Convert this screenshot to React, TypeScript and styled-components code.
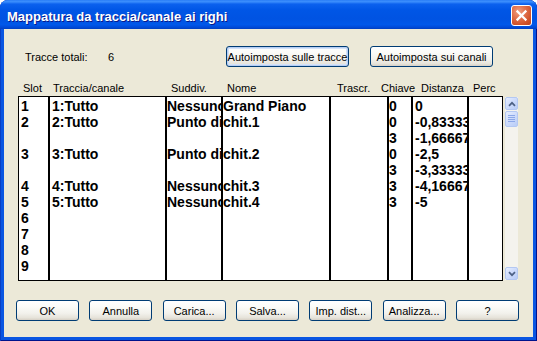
import React from "react";
import styled, { createGlobalStyle } from "styled-components";

const Global = createGlobalStyle`
  html, body { margin: 0; padding: 0; background: #ffffff; }
  body { width: 537px; height: 341px; overflow: hidden; }
  #root { width: 537px; height: 341px; }
  * { box-sizing: border-box; }
`;

const Window = styled.div`
  width: 537px;
  height: 341px;
  display: flex;
  flex-direction: column;
  border-radius: 8px 8px 0 0;
  overflow: hidden;
  background: #0a56e2;
  box-shadow: inset 1px 0 #0a3fc4, inset -1px 0 #00138c, inset 0 -1px #00138c;
  font-family: "Liberation Sans", Arial, sans-serif;
`;

const TitleBar = styled.div`
  height: 29px;
  flex: none;
  display: flex;
  align-items: center;
  justify-content: space-between;
  padding: 0 5px 0 7px;
  background: linear-gradient(
    180deg,
    #2a7ef6 0%,
    #3c8ffd 6%,
    #0b61ee 14%,
    #0056e6 35%,
    #0053e2 65%,
    #0058ea 85%,
    #004ad8 94%,
    #003fc0 100%
  );
`;

const Title = styled.div`
  margin-top: 3px;
  color: #ffffff;
  font-size: 13px;
  font-weight: bold;
  text-shadow: 1px 1px 0 #0a1a8a;
  white-space: nowrap;
`;

const CloseButton = styled.div`
  width: 21px;
  height: 21px;
  margin-top: 2px;
  border: 1px solid #ffffff;
  border-radius: 3px;
  background: radial-gradient(circle at 35% 30%, #f0a083 0%, #e2744f 35%, #cf4f27 75%, #b8421f 100%);
  display: flex;
  align-items: center;
  justify-content: center;
`;

const Body = styled.div`
  flex: 1;
  margin: 0 4px 4px 4px;
  background: #ece9d8;
  display: flex;
  flex-direction: column;
  padding: 17px 0 16px 0;
`;

const TopRow = styled.div`
  display: flex;
  align-items: center;
  height: 21px;
  padding-left: 21px;
  font-size: 11px;
  color: #000;
`;

const Label = styled.div<{ $w: number }>`
  width: ${(p) => p.$w}px;
  flex: none;
  white-space: nowrap;
`;

const XPButton = styled.button<{ $w: number; $focus?: boolean; $ml?: number }>`
  width: ${(p) => p.$w}px;
  height: 21px;
  flex: none;
  margin: 0 0 0 ${(p) => p.$ml ?? 0}px;
  padding: 0;
  border: 1px solid #003c74;
  border-radius: 3px;
  background: linear-gradient(180deg, #ffffff 0%, #fbfbf8 30%, #f2f1ec 65%, #e6e3da 88%, #d6d0c5 100%);
  box-shadow: ${(p) =>
    p.$focus ? "inset 0 0 0 1px #b6cef4, inset 0 0 0 2px #d4e2f8" : "none"};
  font-family: "Liberation Sans", Arial, sans-serif;
  font-size: 11px;
  color: #000;
  white-space: nowrap;
`;

const HeaderRow = styled.div`
  display: flex;
  height: 14px;
  line-height: 14px;
  margin-top: 14px;
  padding-left: 19px;
  font-size: 11px;
  color: #000;
`;

const HeaderCell = styled.div<{ $w?: number }>`
  width: ${(p) => (p.$w ? `${p.$w}px` : "auto")};
  flex: none;
  white-space: nowrap;
`;

const TableArea = styled.div`
  display: flex;
  margin-top: 1px;
  padding-left: 14px;
`;

const ListFrame = styled.div`
  display: flex;
  width: 485px;
  height: 185px;
  border: 1px solid #000;
  background: #ffffff;
`;

const Column = styled.div<{ $w: number; $pad: number; $first?: boolean }>`
  width: ${(p) => p.$w}px;
  flex: none;
  border-left: ${(p) => (p.$first ? "none" : "2px solid #000")};
  padding: 1px 0 0 ${(p) => p.$pad}px;
  overflow: hidden;
`;

const Cell = styled.div`
  height: 16px;
  line-height: 16px;
  font-size: 14px;
  font-weight: bold;
  color: #000;
  white-space: nowrap;
`;

const ScrollBar = styled.div`
  width: 13px;
  height: 183px;
  margin: 1px 0 0 2px;
  display: flex;
  flex-direction: column;
  background: #f4f3ee;
`;

const ScrollButton = styled.div<{ $h?: number }>`
  width: 13px;
  height: ${(p) => p.$h ?? 13}px;
  flex: none;
  border: 1px solid #b4c8f2;
  border-radius: 2px;
  background: linear-gradient(135deg, #e6eeff 0%, #cddbfc 50%, #b9cdf7 100%);
  display: flex;
  align-items: center;
  justify-content: center;
`;

const Thumb = styled(ScrollButton)`
  margin-top: 1px;
`;

const Track = styled.div`
  flex: 1;
`;

const Footer = styled.div`
  display: flex;
  justify-content: space-between;
  margin-top: 19px;
  padding: 0 14px 0 12px;
`;

type Col = { key: string; w: number; pad: number; cells: string[] };

const columns: Col[] = [
  { key: "slot", w: 29, pad: 2, cells: ["1", "2", "", "3", "", "4", "5", "6", "7", "8", "9"] },
  { key: "track", w: 117, pad: 2, cells: ["1:Tutto", "2:Tutto", "", "3:Tutto", "", "4:Tutto", "5:Tutto"] },
  {
    key: "split",
    w: 56,
    pad: 0,
    cells: ["Nessuno", "Punto di divisione", "", "Punto di divisione", "", "Nessuno", "Nessuno"],
  },
  { key: "name", w: 108, pad: 0, cells: ["Grand Piano", "chit.1", "", "chit.2", "", "chit.3", "chit.4"] },
  { key: "transcr", w: 58, pad: 1, cells: [] },
  { key: "key", w: 24, pad: 0, cells: ["0", "0", "3", "0", "3", "3", "3"] },
  {
    key: "dist",
    w: 56,
    pad: 2,
    cells: ["0", "-0,83333", "-1,66667", "-2,5", "-3,33333", "-4,16667", "-5"],
  },
  { key: "perc", w: 35, pad: 1, cells: [] },
];

const headers: { label: string; w?: number }[] = [
  { label: "Slot", w: 30 },
  { label: "Traccia/canale", w: 118 },
  { label: "Suddiv.", w: 56 },
  { label: "Nome", w: 110 },
  { label: "Trascr.", w: 44 },
  { label: "Chiave", w: 40 },
  { label: "Distanza", w: 52 },
  { label: "Perc" },
];

const footerButtons = ["OK", "Annulla", "Carica...", "Salva...", "Imp. dist...", "Analizza...", "?"];

const Chevron = ({ up }: { up: boolean }) => (
  <svg width="8" height="6" viewBox="0 0 8 6">
    <path
      d={up ? "M1 4.8 L4 1.8 L7 4.8" : "M1 1.2 L4 4.2 L7 1.2"}
      fill="none"
      stroke="#4d6185"
      strokeWidth="1.7"
    />
  </svg>
);

const Grip = () => (
  <svg width="7" height="8" viewBox="0 0 7 8">
    {[0.5, 2.5, 4.5, 6.5].map((y) => (
      <line key={y} x1="0" x2="7" y1={y} y2={y} stroke="#8ca8e8" strokeWidth="1" />
    ))}
  </svg>
);

export default function App() {
  return (
    <>
      <Global />
      <Window>
        <TitleBar>
          <Title>Mappatura da traccia/canale ai righi</Title>
          <CloseButton>
            <svg width="13" height="13" viewBox="0 0 13 13">
              <path d="M2.5 2.5 L10.5 10.5 M10.5 2.5 L2.5 10.5" stroke="#ffffff" strokeWidth="2.3" strokeLinecap="square" />
            </svg>
          </CloseButton>
        </TitleBar>
        <Body>
          <TopRow>
            <Label $w={83}>Tracce totali:</Label>
            <Label $w={118}>6</Label>
            <XPButton $w={123} $focus>
              Autoimposta sulle tracce
            </XPButton>
            <XPButton $w={123} $ml={21}>
              Autoimposta sui canali
            </XPButton>
          </TopRow>
          <HeaderRow>
            {headers.map((h) => (
              <HeaderCell key={h.label} $w={h.w}>
                {h.label}
              </HeaderCell>
            ))}
          </HeaderRow>
          <TableArea>
            <ListFrame>
              {columns.map((c, i) => (
                <Column key={c.key} $w={c.w} $pad={c.pad} $first={i === 0}>
                  {c.cells.map((t, j) => (
                    <Cell key={j}>{t}</Cell>
                  ))}
                </Column>
              ))}
            </ListFrame>
            <ScrollBar>
              <ScrollButton>
                <Chevron up />
              </ScrollButton>
              <Thumb $h={16}>
                <Grip />
              </Thumb>
              <Track />
              <ScrollButton>
                <Chevron up={false} />
              </ScrollButton>
            </ScrollBar>
          </TableArea>
          <Footer>
            {footerButtons.map((b) => (
              <XPButton key={b} $w={63}>
                {b}
              </XPButton>
            ))}
          </Footer>
        </Body>
      </Window>
    </>
  );
}
